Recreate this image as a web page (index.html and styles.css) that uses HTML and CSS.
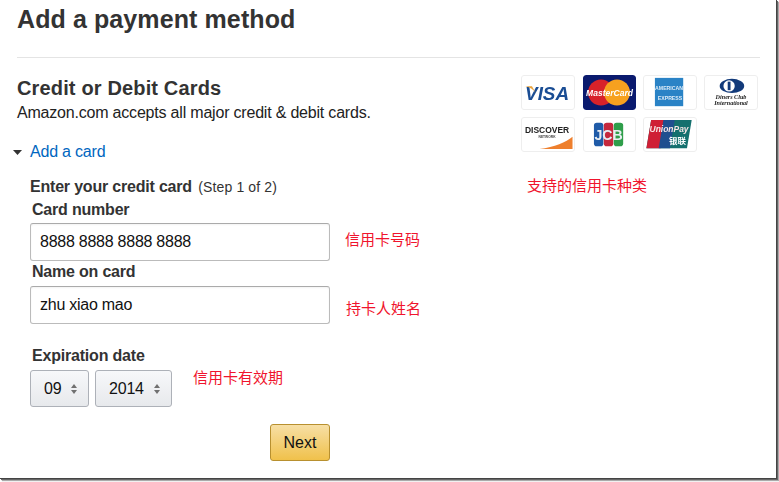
FILE: index.html
```html
<!DOCTYPE html>
<html lang="en">
<head>
  <meta charset="UTF-8">
  <meta name="viewport" content="width=device-width, initial-scale=1.0">
  <title>Add a payment method</title>
  <link rel="stylesheet" href="styles.css">
</head>
<body>
  <div class="frame">
    <h1>Add a payment method</h1>
    <hr class="rule">
    <div class="section">
      <div class="main">
        <h2>Credit or Debit Cards</h2>
        <p class="accepts">Amazon.com accepts all major credit &amp; debit cards.</p>
        <div class="add-card">
          <svg class="caret" width="9" height="5" viewBox="0 0 9 5"><path d="M0 0h9L4.500 5z" fill="#333"/></svg>
          <a href="#">Add a card</a>
        </div>
        <form class="card-form">
          <div class="form-title"><b>Enter your credit card</b> <span>(Step 1 of 2)</span></div>
          <label class="field-label">Card number</label>
          <div class="row">
            <input class="text-input" type="text" value="8888 8888 8888 8888">
            <span class="note note-number">信用卡号码</span>
          </div>
          <label class="field-label label-name">Name on card</label>
          <div class="row">
            <input class="text-input" type="text" value="zhu xiao mao">
            <span class="note note-name">持卡人姓名</span>
          </div>
          <label class="field-label label-date">Expiration date</label>
          <div class="row date-row">
            <div class="drop drop-month">09
              <svg width="6" height="10" viewBox="0 0 6 10"><path d="M3 0l3 4H0zM3 10L0 6h6z" fill="#707070"/></svg>
            </div>
            <div class="drop drop-year">2014
              <svg width="6" height="10" viewBox="0 0 6 10"><path d="M3 0l3 4H0zM3 10L0 6h6z" fill="#707070"/></svg>
            </div>
            <span class="note note-date">信用卡有效期</span>
          </div>
          <div class="actions">
            <button class="next" type="button">Next</button>
          </div>
        </form>
      </div>
      <div class="aside">
        <div class="logos">
          <svg class="logo" viewBox="0 0 54 35">
            <text x="26" y="25" class="t-visa">VISA</text>
            <path d="M3 11h7l4 7c-2-3-6-6-11-7z" fill="#e8a33d"/>
          </svg>
          <svg class="logo logo-mc logo-mid" viewBox="0 0 53 35">
            <rect x="0" y="0" width="53" height="35" rx="3" fill="#0a1a6e"/>
            <circle cx="18" cy="17.500" r="13" fill="#d8222a"/>
            <circle cx="34" cy="17.500" r="13" fill="#f7a11f"/>
            <text x="26.500" y="21" class="t-mc">MasterCard</text>
          </svg>
          <svg class="logo" viewBox="0 0 54 35">
            <rect x="11" y="2" width="30" height="30" fill="#2a83c6"/>
            <text x="26" y="15" class="t-amex">AMERICAN</text>
            <text x="27" y="25" class="t-amex">EXPRESS</text>
          </svg>
          <svg class="logo" viewBox="0 0 54 35">
            <ellipse cx="28" cy="10.500" rx="13" ry="7.500" fill="#123a7a"/>
            <circle cx="25" cy="10.500" r="6" fill="#fff"/>
            <rect x="23.500" y="6" width="3" height="9" fill="#123a7a"/>
            <text x="27" y="24" class="t-diners">Diners Club</text>
            <text x="27" y="31" class="t-diners">International</text>
          </svg>
          <svg class="logo" viewBox="0 0 54 35">
            <path d="M18 33C34 31 46 26 53 20v13z" fill="#ee7f2d"/>
            <text x="26" y="16" class="t-disc">DISCOVER</text>
            <text x="26" y="21" class="t-net">NETWORK</text>
          </svg>
          <svg class="logo logo-mid" viewBox="0 0 53 35">
            <rect x="10" y="5" width="10" height="25" rx="3" fill="#1f5ba8"/>
            <rect x="20.500" y="5" width="10" height="25" rx="3" fill="#c5283d"/>
            <rect x="31" y="5" width="10" height="25" rx="3" fill="#2f9e4a"/>
            <text x="25.500" y="23" class="t-jcb">JCB</text>
          </svg>
          <svg class="logo" viewBox="0 0 54 35">
            <path d="M2 32L7 2h43l-5 30z" fill="#14706e"/>
            <path d="M2 32L7 2h15l-5 30z" fill="#cf1f35"/>
            <path d="M15 32L20 2h12l-5 30z" fill="#1f4f8f"/>
            <text x="26" y="15" class="t-union">UnionPay</text>
            <text x="35" y="28" class="t-union-cn">银联</text>
          </svg>
        </div>
        <span class="note note-kinds">支持的信用卡种类</span>
      </div>
    </div>
  </div>
</body>
</html>
```
FILE: styles.css
```css
html, body {
  margin: 0;
  background-color: #fff;
}
body {
  width: 779px;
  height: 482px;
  overflow: hidden;
  font-family: "Liberation Sans", Arial, sans-serif;
  color: #333;
}
.frame {
  box-sizing: border-box;
  width: 777px;
  height: 479px;
  padding-left: 17px;
  background-color: #fff;
  border-right: 1px solid #444;
  border-bottom: 1px solid #444;
  box-shadow: 1px 1px 0 #666, 2px 2px 1px #aaa;
  overflow: hidden;
}
h1 {
  margin: 0;
  padding-top: 5px;
  font-size: 25px;
  letter-spacing: 0.1px;
  line-height: 29px;
  font-weight: bold;
}
.rule {
  width: 743px;
  height: 1px;
  margin: 23px 0 0;
  border: none;
  background-color: #e4e4e4;
}
.section {
  display: flex;
}
.main {
  width: 504px;
}
h2 {
  margin: 0;
  padding-top: 19px;
  font-size: 20px;
  letter-spacing: 0.15px;
  line-height: 23px;
  font-weight: bold;
}
.accepts {
  margin: 3px 0 0;
  font-size: 16px;
  letter-spacing: -0.2px;
  line-height: 20px;
  color: #222;
}
.add-card {
  display: flex;
  align-items: center;
  margin: 19px 0 0 -4px;
  font-size: 16px;
  letter-spacing: -0.2px;
  line-height: 20px;
}
.caret {
  margin-right: 8px;
}
.add-card a {
  color: #0066c0;
  text-decoration: none;
}
.card-form {
  margin: 15px 0 0 13px;
}
.form-title {
  font-size: 16px;
  letter-spacing: -0.2px;
  line-height: 19px;
}
.form-title span {
  margin-left: 2px;
  font-size: 14px;
  letter-spacing: 0.15px;
}
.field-label {
  display: block;
  margin: 3px 0 4px 2px;
  font-size: 16px;
  letter-spacing: -0.2px;
  line-height: 19px;
  font-weight: bold;
}
.label-name {
  margin-top: 1px;
  margin-bottom: 5px;
}
.label-date {
  margin-top: 22px;
  margin-bottom: 5px;
}
.row {
  display: flex;
  align-items: center;
}
.text-input {
  box-sizing: border-box;
  width: 300px;
  height: 38px;
  padding: 0 9px;
  border: 1px solid #bbb;
  border-top-color: #aaa;
  border-radius: 3px;
  font-family: inherit;
  font-size: 16px;
  letter-spacing: -0.25px;
  color: #111;
  box-shadow: inset 0 1px 2px rgba(0,0,0,0.05);
}
.note {
  font-family: "Noto Sans CJK SC", "Liberation Sans", sans-serif;
  font-size: 15px;
  line-height: 20px;
  color: #f0142d;
}
.note-number {
  margin: 0 0 6px 15px;
}
.note-name {
  margin: 5px 0 0 16px;
}
.drop {
  box-sizing: border-box;
  display: flex;
  align-items: center;
  justify-content: space-between;
  height: 37px;
  padding: 0 11px 0 13px;
  border: 1px solid #adb1b8;
  border-radius: 3px;
  background: linear-gradient(#f7f8fa, #e7e9ec);
  font-size: 16px;
  letter-spacing: -0.2px;
  color: #111;
}
.drop-month {
  width: 59px;
}
.drop-year {
  width: 77px;
  margin-left: 6px;
}
.date-row .note-date {
  align-self: flex-start;
  margin: -3px 0 0 21px;
}
.actions {
  display: flex;
  justify-content: flex-end;
  width: 300px;
  margin-top: 17px;
}
.next {
  width: 60px;
  height: 37px;
  padding: 0;
  border: 1px solid #b8902f;
  border-radius: 3px;
  background: linear-gradient(#f7dfa5, #f0c14b);
  font-family: inherit;
  font-size: 16px;
  color: #111;
}
.aside {
  padding-top: 17px;
}
.logos {
  display: grid;
  grid-template-columns: repeat(4, 54px);
  grid-auto-rows: 35px;
  gap: 7px;
}
.logo {
  box-sizing: border-box;
  width: 54px;
  height: 35px;
  border: 1px solid #eee;
  border-radius: 3px;
  background-color: #fff;
  filter: blur(0.3px);
}
.logo-mid {
  width: 53px;
  margin-left: 1px;
}
.logo-mc {
  border: none;
}
.logo text {
  text-anchor: middle;
  font-family: "Liberation Sans", Arial, sans-serif;
  font-weight: bold;
}
.t-visa {
  font-size: 20px;
  font-style: italic;
  fill: #1a4d94;
}
.t-mc {
  font-size: 8.500px;
  font-style: italic;
  fill: #fff;
}
.t-amex {
  font-size: 5.500px;
  fill: #dcebf7;
}
.logo .t-diners {
  font-family: "Liberation Serif", serif;
  font-size: 6.500px;
  font-style: italic;
  fill: #222;
}
.t-disc {
  font-size: 9px;
  fill: #222;
}
.t-net {
  font-size: 3.500px;
  fill: #444;
}
.t-jcb {
  font-size: 15px;
  fill: #e8edf2;
}
.t-union {
  font-size: 9px;
  font-style: italic;
  fill: #f6e6e6;
}
.logo .t-union-cn {
  font-family: "Noto Sans CJK SC", sans-serif;
  font-size: 9px;
  fill: #fff;
}
.note-kinds {
  display: block;
  margin: 23px 0 0 6px;
}
```
